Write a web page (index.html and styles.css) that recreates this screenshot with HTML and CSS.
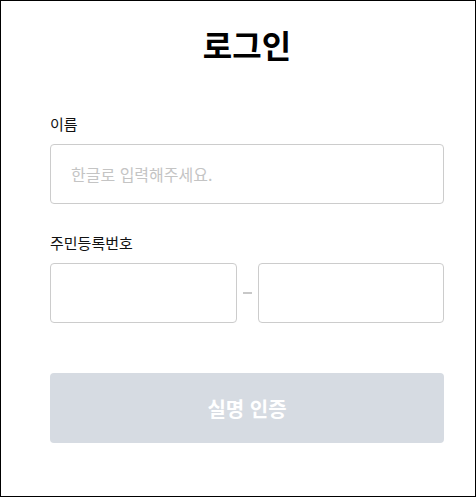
FILE: index.html
```html
<!DOCTYPE html>
<html lang="ko">
  <head>
    <meta charset="UTF-8" />
    <meta name="viewport" content="width=device-width, initial-scale=1.0" />
    <title>로그인</title>
    <link rel="stylesheet" href="styles.css">
  </head>
  <body>
    <div class="page">
      <div class="login">
        <h1>로그인</h1>

        <label for="name" class="label">이름</label>
        <input type="text" id="name" class="field" placeholder="한글로 입력해주세요." />

        <label for="rrn-front" class="label label-rrn">주민등록번호</label>
        <div class="rrn">
          <input type="text" id="rrn-front" class="field" maxlength="6" />
          <span class="dash"></span>
          <input type="password" id="rrn-back" class="field" maxlength="7" />
        </div>

        <button class="submit" disabled>실명 인증</button>
      </div>
    </div>
  </body>
</html>
```

FILE: styles.css
```css
* {
  box-sizing: border-box;
}
body {
  margin: 0;
  font-family: "Noto Sans CJK KR", "Noto Sans", sans-serif;
  background-color: #fff;
  color: #111;
}
.page {
  width: 476px;
  height: 497px;
  border: 1px solid #000;
  padding: 23px 0 0 49px;
}
.login {
  width: 394px;
  display: flex;
  flex-direction: column;
}
h1 {
  margin: 0 0 50px;
  font-size: 32px;
  line-height: 40px;
  font-weight: 700;
  text-align: center;
  color: #000;
}
.label {
  font-size: 15px;
  line-height: 20px;
  margin-bottom: 10px;
  color: #111;
}
.label-rrn {
  margin-top: 29px;
}
.field {
  width: 100%;
  height: 60px;
  padding: 0 20px;
  border: 1px solid #ccc;
  border-radius: 4px;
  font-family: inherit;
  font-size: 16px;
  color: #111;
  outline: none;
}
.field::placeholder {
  color: #c4c4c4;
}
.rrn {
  display: flex;
  align-items: center;
  gap: 6px;
}
.rrn .field {
  flex: 1;
  min-width: 0;
}
.dash {
  width: 9px;
  height: 2px;
  background-color: #c8c8c8;
}
.submit {
  margin-top: 50px;
  height: 70px;
  border: none;
  border-radius: 4px;
  background-color: #d6dbe2;
  color: #fff;
  font-family: inherit;
  font-size: 20px;
  font-weight: 700;
}
```
